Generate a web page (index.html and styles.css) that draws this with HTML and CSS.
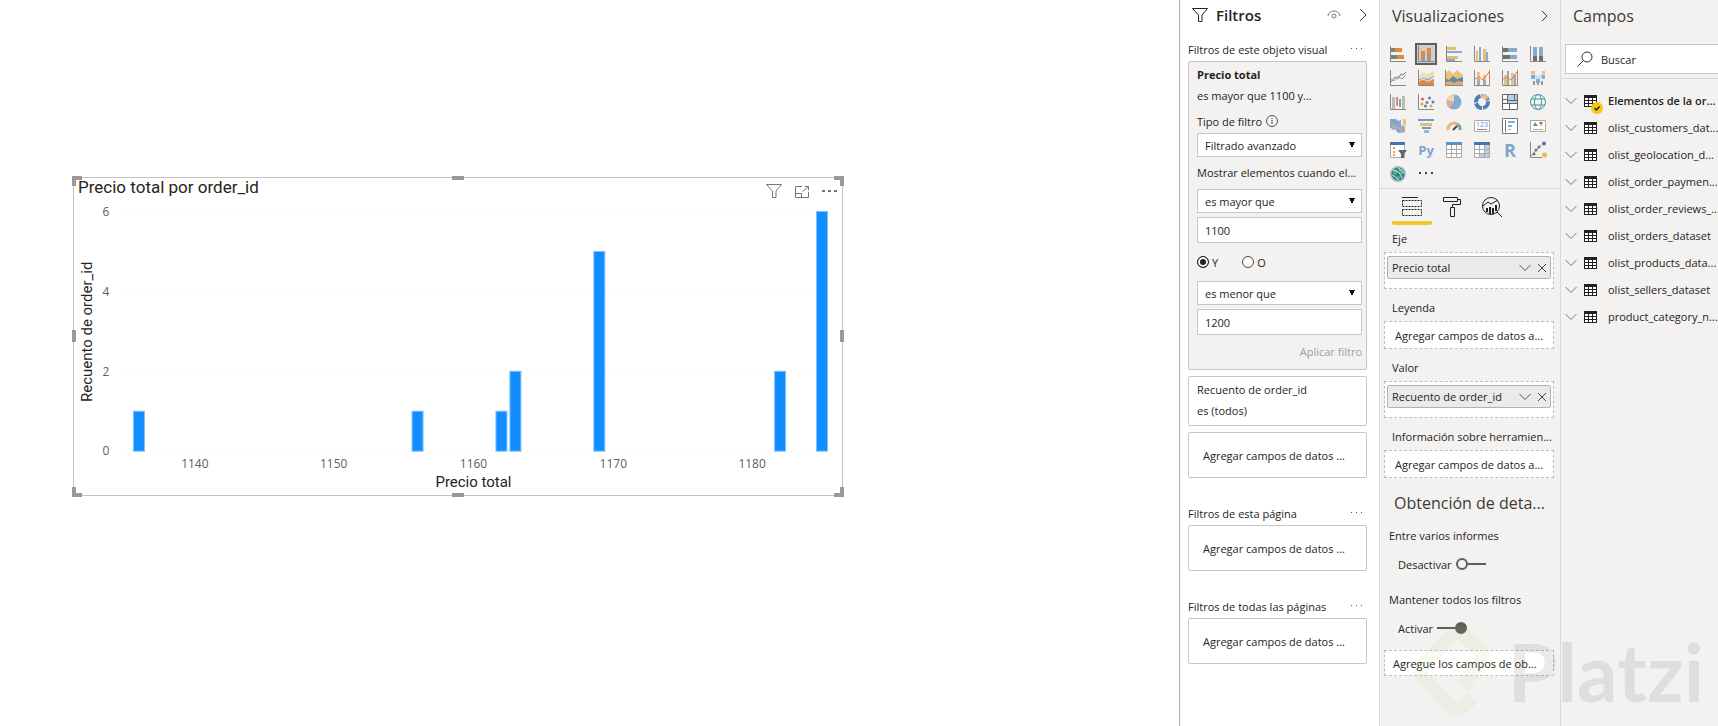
FILE: index.html
```html
<!DOCTYPE html>
<html lang="es">
<head>
	<meta charset="UTF-8">
	<meta name="viewport" content="width=device-width, initial-scale=1.0">
	<title>Precio total por order_id</title>
	<link rel="stylesheet" href="styles.css">
</head>
<body>
	<div class="app">
		<main class="canvas">
			<section class="visual">
				<div class="visual-header">
					<h1>Precio total por order_id</h1>
					<div class="visual-actions">
						<button aria-label="Filtros"><svg width="16" height="16" viewBox="0 0 16 16"><path d="M.5 1.5h15L10 8v6.500H6.500V8z" fill="none" stroke="#777" /></svg></button>
						<button aria-label="Modo de enfoque"><svg width="16" height="16" viewBox="0 0 16 16"><path d="M8 3.500H1.500v11h13V9M1.500 10.500h6v4M8.500 8.500l6-5M10.500 3.500h4v4" fill="none" stroke="#777" /></svg></button>
						<button aria-label="Más opciones"><svg width="16" height="16" viewBox="0 0 16 16"><path d="M0 7h3v2H0zM6 7h3v2H6zM12 7h3v2h-3z" fill="#777" /></svg></button>
					</div>
				</div>
				<svg class="chart" viewBox="0 0 769 290">
					<g class="grid-lines">
						<path d="M46 8.500H744M46 88.500H744M46 168.500H744M46 248.500H744" />
					</g>
					<g class="bars">
						<rect x="59.500" y="208.500" width="11" height="40" />
						<rect x="338.500" y="208.500" width="11" height="40" />
						<rect x="422.500" y="208.500" width="11" height="40" />
						<rect x="436.500" y="168.500" width="11" height="80" />
						<rect x="520.500" y="48.500" width="11" height="200" />
						<rect x="701.500" y="168.500" width="11" height="80" />
						<rect x="743.500" y="8.500" width="11" height="240" />
					</g>
					<g class="ticks">
						<text x="32" y="13">6</text>
						<text x="32" y="93">4</text>
						<text x="32" y="173">2</text>
						<text x="32" y="252">0</text>
						<text x="121" y="265">1140</text>
						<text x="260" y="265">1150</text>
						<text x="400" y="265">1160</text>
						<text x="540" y="265">1170</text>
						<text x="679" y="265">1180</text>
					</g>
					<g class="axis-titles">
						<text x="400" y="284">Precio total</text>
						<text transform="translate(18 129) rotate(-90)">Recuento de order_id</text>
					</g>
				</svg>
				<i class="handle top left"></i>
				<i class="handle top middle"></i>
				<i class="handle top right"></i>
				<i class="handle center left"></i>
				<i class="handle center right"></i>
				<i class="handle bottom left"></i>
				<i class="handle bottom middle"></i>
				<i class="handle bottom right"></i>
			</section>
		</main>

		<aside class="filters">
			<header class="filters-header">
				<svg width="16" height="16" viewBox="0 0 16 16"><path d="M.5 1.500h15L10 8v6.500H6.500V8z" fill="none" stroke="#252423" /></svg>
				<h2>Filtros</h2>
				<button aria-label="Ocultar"><svg width="14" height="12" viewBox="0 0 14 12"><path d="M1 7a6 5 0 0 1 12 0" fill="none" stroke="#777" /><circle cx="7" cy="7" r="2" fill="none" stroke="#777" /></svg></button>
				<button aria-label="Contraer"><svg width="8" height="14" viewBox="0 0 8 14"><path d="M1 1l6 6-6 6" fill="none" stroke="#333" /></svg></button>
			</header>

			<div class="section-title"><h3>Filtros de este objeto visual</h3><button aria-label="Más"><svg width="12" height="2" viewBox="0 0 12 2"><path d="M0 0h1v1H0zM5 0h1v1H5zM10 0h1v1h-1z" fill="#555"/></svg></button></div>
			<form class="card active">
				<strong class="card-title">Precio total</strong>
				<p class="card-summary">es mayor que 1100 y...</p>
				<label class="type-label" for="filter-type">Tipo de filtro
					<svg width="12" height="12" viewBox="0 0 12 12"><circle cx="6" cy="6" r="5.500" fill="none" stroke="#555" /><path d="M6 5v4M6 3v1" stroke="#555" /></svg>
				</label>
				<select id="filter-type"><option>Filtrado avanzado</option></select>
				<label class="show-label" for="cond-1">Mostrar elementos cuando el...</label>
				<select id="cond-1"><option>es mayor que</option></select>
				<input type="text" value="1100" aria-label="Valor mínimo">
				<div class="radios">
					<label><input type="radio" name="join" checked>Y</label>
					<label><input type="radio" name="join">O</label>
				</div>
				<select aria-label="Segunda condición"><option>es menor que</option></select>
				<input type="text" value="1200" aria-label="Valor máximo">
				<button class="apply" type="button" disabled>Aplicar filtro</button>
			</form>
			<div class="card">
				<p class="card-title">Recuento de order_id</p>
				<p class="card-summary">es (todos)</p>
			</div>
			<div class="card drop">Agregar campos de datos ...</div>

			<div class="section-title spaced"><h3>Filtros de esta página</h3><button aria-label="Más"><svg width="12" height="2" viewBox="0 0 12 2"><path d="M0 0h1v1H0zM5 0h1v1H5zM10 0h1v1h-1z" fill="#555"/></svg></button></div>
			<div class="card drop">Agregar campos de datos ...</div>

			<div class="section-title spaced"><h3>Filtros de todas las páginas</h3><button aria-label="Más"><svg width="12" height="2" viewBox="0 0 12 2"><path d="M0 0h1v1H0zM5 0h1v1H5zM10 0h1v1h-1z" fill="#555"/></svg></button></div>
			<div class="card drop">Agregar campos de datos ...</div>
		</aside>

		<aside class="visualizations">
			<header class="pane-header">
				<h2>Visualizaciones</h2>
				<button aria-label="Contraer"><svg width="8" height="14" viewBox="0 0 8 14"><path d="M1 2l5 5-5 5" fill="none" stroke="#333" /></svg></button>
			</header>

			<div class="gallery">
				<button aria-label="Barras apiladas"><svg viewBox="0 0 16 16"><path fill="#808080" d="M1 2h4v4H1zM1 9h6v4H1z"/><path fill="#e0893f" d="M5 2h7v4H5zM7 9h7v4H7z"/><path class="axis" d="M.5 0v15.500H16"/></svg></button>
				<button class="selected" aria-label="Columnas apiladas"><svg viewBox="0 0 16 16"><path fill="#999" d="M3 11h4v4H3zM9 9h4v6H9z"/><path fill="#e0893f" d="M3 5h4v6H3zM9 2h4v7H9z"/><path class="axis" d="M.5 0v15.500H16"/></svg></button>
				<button aria-label="Barras agrupadas"><svg viewBox="0 0 16 16"><path fill="#e6bc73" d="M1 1h9v3H1zM1 10h11v3H1z"/><path fill="#86abd0" d="M1 5h15v2H1zM1 13h8v2H1z"/><path class="axis" d="M.5 0v15.500H16"/></svg></button>
				<button aria-label="Columnas agrupadas"><svg viewBox="0 0 16 16"><path fill="#e6bc73" d="M2 5h2v10H2zM9 3h3v12H9z"/><path fill="#86abd0" d="M5 1h2v14H5zM12 6h2v9h-2z"/><path class="axis" d="M.5 0v15.500H16"/></svg></button>
				<button aria-label="Barras 100% apiladas"><svg viewBox="0 0 16 16"><path fill="#707070" d="M1 2h5v4H1zM1 9h7v4H1z"/><path fill="#86abd0" d="M6 2h9v4H6zM8 9h7v4H8z"/><path class="axis" d="M.5 0v15.500H16"/></svg></button>
				<button aria-label="Columnas 100% apiladas"><svg viewBox="0 0 16 16"><path fill="#707070" d="M3 10h4v5H3zM9 10h4v5H9z"/><path fill="#86abd0" d="M3 1h4v9H3zM9 1h4v9H9z"/><path class="axis" d="M.5 0v15.500H16"/></svg></button>

				<button aria-label="Líneas"><svg viewBox="0 0 16 16"><path fill="none" stroke="#4a8fc4" d="M1 12l4-5 3 2 3-5 2 1 3-3"/><path fill="none" stroke="#d68a7e" d="M1 9l3 2 4-5 4 3 4-4"/><path class="axis" d="M.5 0v15.500H16"/></svg></button>
				<button aria-label="Áreas"><svg viewBox="0 0 16 16"><path fill="#f0dcb4" d="M1 6l4-4 4 2 7-3v10H1z"/><path fill="#86abd0" d="M1 9l5-1 4 1 6-3v7H1z"/><path fill="#f3f2f1" d="M1 10l5-1 4 2 6-4v2l-6 3-4-2-5 1z"/><path fill="#e0893f" d="M1 11l5-1 4 2 6-3v6H1z"/><path class="axis" d="M.5 0v15.500H16"/></svg></button>
				<button aria-label="Áreas apiladas"><svg viewBox="0 0 16 16"><path fill="#ecc27a" d="M-1 4l4-4 4 4 4-4 6 5v10H-1z"/><path fill="#5c8ba8" d="M-1 8l4 2 4-4 4 3 6-2v6H-1z"/><path fill="#e9a36c" d="M-1 12l5-1 4 2 4-2 5 1v3H-1z"/><path class="axis" d="M-.5 0v15.500H17"/></svg></button>
				<button aria-label="Líneas y columnas apiladas"><svg viewBox="0 0 16 16"><path fill="#ecc27a" d="M3 2h3v7H3zM9 5h3v5H9z"/><path fill="#aaa" d="M3 9h3v6H3zM9 10h3v5H9z"/><path fill="none" stroke="#d97b58" d="M1 9l4-2 4 3 6-8M15.500 0v15"/><path class="axis" d="M.5 0v15.500H16"/></svg></button>
				<button aria-label="Líneas y columnas agrupadas"><svg viewBox="0 0 16 16"><path fill="#86abd0" d="M5 1h2v14H5zM12 5h2v10h-2z"/><path fill="#ecc27a" d="M2 5h3v10H2zM9 3h3v12H9z"/><path fill="none" stroke="#d97b58" d="M1 9l4-2 4 3 6-8M15.500 0v15"/><path class="axis" d="M.5 0v15.500H16"/></svg></button>
				<button aria-label="Cinta"><svg viewBox="0 0 16 16"><path fill="#cfdcea" d="M2 3l6 3 6-4v4l-6 5-6-4z"/><path fill="#86abd0" d="M1 5h4v4H1zM6 9h4v4H6zM12 5h3v4h-3z"/><path fill="#ecc27a" d="M1 1h4v3H1zM12 1h3v3h-3z"/><path fill="#999" d="M3 11h2v4H3zM7 13h2v2H7zM11 11h2v4h-2z"/></svg></button>

				<button aria-label="Cascada"><svg viewBox="0 0 16 16"><path fill="#bbb" d="M2 3h3v12H2zM12 2h3v13h-3z"/><path fill="#d68a7e" d="M6 3h2v9H6z"/><path fill="#7aa893" d="M9 5h2v8H9z"/><path class="axis" d="M.5 0v15.500H16"/></svg></button>
				<button aria-label="Dispersión"><svg viewBox="0 0 16 16"><g fill="#d06b5c"><circle cx="4.500" cy="5" r="1.500"/><circle cx="9" cy="8.500" r="1.500"/></g><g fill="#4f86bc"><circle cx="11.500" cy="4" r="1.500"/><circle cx="7.500" cy="12" r="1.500"/><circle cx="15" cy="8" r="1.500"/></g><g fill="#e0a94b"><circle cx="4" cy="10" r="1.500"/><circle cx="13" cy="12" r="1.500"/></g><path class="axis" d="M.5 0v15.500H16"/></svg></button>
				<button aria-label="Circular"><svg viewBox="0 0 16 16"><circle cx="8" cy="8" r="7.500" fill="#86abd0"/><path fill="#ecd9b0" d="M8 8L1 6a7.500 7.500 0 0 1 7-6z"/><path fill="#e3aba0" d="M8 8L1 6a7.500 7.500 0 0 0 3 8z"/></svg></button>
				<button aria-label="Anillos"><svg viewBox="0 0 16 16"><circle cx="8" cy="8" r="6" fill="none" stroke="#4d80b4" stroke-width="4" stroke-dasharray="8 1"/><path d="M8 2a6 6 0 0 1 5 3" fill="none" stroke="#ecc27a" stroke-width="4"/></svg></button>
				<button aria-label="Treemap"><svg viewBox="0 0 16 16"><path fill="#fff" d="M0 0h16v16H0z"/><path fill="#b9cfe4" d="M5 0h10v9H5z"/><path fill="none" stroke="#666" d="M.5 .5h15v15H.5zM5.500 .5v9M.5 9.500h15M12.500 .5v6M7.500 9.500v6M.5 5.500h5M5.500 6.500h10"/></svg></button>
				<button aria-label="Mapa"><svg viewBox="0 0 16 16"><g fill="#eef6f6" stroke="#4b9296"><circle cx="8" cy="8" r="7.500"/><ellipse cx="8" cy="8" rx="3.500" ry="7.500"/><path d="M1 5h14M1 11h14"/></g></svg></button>

				<button aria-label="Mapa coroplético"><svg viewBox="0 0 16 16"><path fill="#7ca6d0" d="M0 1h6l2 2 3-1v5l-2 3 3 4-4 1-3-4-5-1z"/><path fill="#aaa" d="M0 5l5 1 3 3 4-2 3 2v5l-4 1-2-4-7 1z"/><path fill="#ecc27a" d="M13 1h3v7l-3-1z"/></svg></button>
				<button aria-label="Embudo"><svg viewBox="0 0 16 16"><path fill="#6e9cca" d="M0 1h16v2H0zM4 9h9v2H4z"/><path fill="#e6bc73" d="M2 5h12v3H2z"/><path fill="#9ab9d8" d="M6 12h5v3H6z"/></svg></button>
				<button aria-label="Medidor"><svg viewBox="0 0 16 16"><path d="M2 12a6 6 0 0 1 9-6" fill="none" stroke="#e6bc73" stroke-width="3"/><path d="M11 6a6 6 0 0 1 3 6" fill="none" stroke="#7aa893" stroke-width="3"/><path d="M7 12l4-4" stroke="#444" stroke-width="2"/></svg></button>
				<button aria-label="Tarjeta"><svg viewBox="0 0 16 16"><path fill="#fff" stroke="#aaa" d="M.5 2.500h15v11H.5z"/><path d="M3 11.500h10" stroke="#888"/><text x="8" y="9" class="digits">123</text></svg></button>
				<button aria-label="Tarjeta de varias filas"><svg viewBox="0 0 16 16"><path fill="#fff" stroke="#777" d="M.5 .5h15v15H.5z"/><path fill="#777" d="M3 2h1v12H3z"/><path fill="#86abd0" d="M6 3h7v2H6zM6 7h4v2H6zM6 11h3v1H6z"/></svg></button>
				<button aria-label="KPI"><svg viewBox="0 0 16 16"><path fill="#fff" stroke="#aaa" d="M.5 2.500h15v11H.5z"/><path fill="#5a9a80" d="M3 8l2-4 3 4z"/><path fill="#c96353" d="M9 4h4l-2 4z"/><path d="M3 11.500h10" stroke="#aaa"/></svg></button>

				<button aria-label="Segmentación"><svg viewBox="0 0 16 16"><path fill="#fff" stroke="#aaa" d="M.5 .5h14v15H.5z"/><path fill="#3f78ac" d="M0 0h15v3H0z"/><path fill="#e6a367" d="M3 5h2v2H3zM3 9h2v2H3zM3 12h2v2H3z"/><path fill="#666" d="M8 8h9l-3 4v4h-3v-4z"/></svg></button>
				<button class="letters" aria-label="Python">Py</button>
				<button aria-label="Tabla"><svg viewBox="0 0 16 16"><path fill="#fff" stroke="#aaa" d="M.5 .5h15v15H.5zM5.500 2v13M10.500 2v13M0 7.500h15M0 11.500h15"/><path fill="#5d92c4" d="M0 0h16v3H0z"/></svg></button>
				<button aria-label="Matriz"><svg viewBox="0 0 16 16"><path fill="#fff" stroke="#aaa" d="M.5 .5h15v15H.5z"/><path fill="#b9cfe4" d="M10 3h5v12h-5zM5 11h10v4H5z"/><path fill="none" stroke="#aaa" d="M5.500 2v13M10.500 2v13M0 7.500h15M0 11.500h15"/><path fill="#3f78ac" d="M0 0h16v3H0z"/></svg></button>
				<button class="letters big" aria-label="R">R</button>
				<button aria-label="Elementos influyentes"><svg viewBox="0 0 16 16"><path class="axis" d="M.5 0v15.500H12M1 14L11 3"/><g fill="#777"><circle cx="4" cy="12" r="1.500"/><circle cx="6" cy="8" r="1.500"/><circle cx="9" cy="5" r="1.500"/></g><circle cx="14" cy="1.500" r="2" fill="#3f78ac"/><circle cx="14.500" cy="13" r="2.500" fill="#e6bc4c"/></svg></button>

				<button aria-label="ArcGIS"><svg viewBox="0 0 16 16"><circle cx="8" cy="8" r="8" fill="#a9c3bd"/><circle cx="8" cy="8" r="6.500" fill="#2878a8"/><path fill="#58b06c" d="M3 5l4-2 1 3-2 3-3-1zM9 2l4 3-1 4-3-2zM7 10l4 1-2 3-3-1z"/><path fill="none" stroke="#d5e8df" d="M3 4q7 1 9 8M8 2q5 2 6 6M2 9q4 1 6 5"/></svg></button>
				<button aria-label="Más visualizaciones"><svg viewBox="0 0 16 16"><path fill="#444" d="M1 6h2v2H1zM7 6h2v2H7zM13 6h2v2h-2z"/></svg></button>
			</div>

			<nav class="tabs">
				<button class="current" aria-label="Campos"><svg width="20" height="20" viewBox="0 0 20 20"><path d="M0 .5h16" stroke="#222"/><path d="M.5 3.500h19v6H.5zM.5 12.500h19v6H.5z" fill="none" stroke="#222" stroke-dasharray="2 1"/></svg></button>
				<button aria-label="Formato"><svg width="20" height="20" viewBox="0 0 20 20"><path d="M1.500 .5h14v4h-14zM15.500 2.500h3v5h-8v3M8.500 10.500h4v9h-4z" fill="none" stroke="#222"/></svg></button>
				<button aria-label="Análisis"><svg width="20" height="20" viewBox="0 0 20 20"><circle cx="9" cy="9" r="8.500" fill="none" stroke="#222"/><path d="M1 9l5-4 3 2 7-4M15 15l5 5" fill="none" stroke="#222"/><path d="M5 11v4M8 10v7M11 11v6M14 8v6" stroke="#222" stroke-width="2"/></svg></button>
			</nav>

			<h3 class="well-title">Eje</h3>
			<div class="well filled">
				<div class="chip"><span>Precio total</span>
					<button aria-label="Opciones"><svg width="12" height="8" viewBox="0 0 12 8"><path d="M.5 1L6 6.500 11.500 1" fill="none" stroke="#555"/></svg></button>
					<button aria-label="Quitar"><svg width="10" height="10" viewBox="0 0 10 10"><path d="M1 1l8 8M9 1L1 9" stroke="#444"/></svg></button>
				</div>
			</div>
			<h3 class="well-title">Leyenda</h3>
			<div class="well">Agregar campos de datos a...</div>
			<h3 class="well-title">Valor</h3>
			<div class="well filled">
				<div class="chip"><span>Recuento de order_id</span>
					<button aria-label="Opciones"><svg width="12" height="8" viewBox="0 0 12 8"><path d="M.5 1L6 6.500 11.500 1" fill="none" stroke="#555"/></svg></button>
					<button aria-label="Quitar"><svg width="10" height="10" viewBox="0 0 10 10"><path d="M1 1l8 8M9 1L1 9" stroke="#444"/></svg></button>
				</div>
			</div>
			<h3 class="well-title">Información sobre herramien...</h3>
			<div class="well">Agregar campos de datos a...</div>

			<h2 class="drill-title">Obtención de deta...</h2>
			<p class="drill-label">Entre varios informes</p>
			<label class="toggle"><span>Desactivar</span><input type="checkbox" role="switch"></label>
			<p class="drill-label">Mantener todos los filtros</p>
			<label class="toggle"><span>Activar</span><input type="checkbox" role="switch" checked></label>
			<div class="well last">Agregue los campos de ob...</div>
		</aside>

		<aside class="fields">
			<header class="pane-header"><h2>Campos</h2></header>
			<div class="search">
				<svg width="16" height="16" viewBox="0 0 16 16"><circle cx="10" cy="6" r="5" fill="none" stroke="#333"/><path d="M6.500 9.500L.5 15.500" stroke="#333"/></svg>
				<input type="text" placeholder="Buscar" aria-label="Buscar">
			</div>
			<ul class="tables" id="table-list"></ul>
		</aside>

		<div class="watermark">
			<svg width="82" height="98" viewBox="0 0 82 98"><path d="M60 76L51 85q-6 6-12 0L11 55q-6-6 0-12L40 13q6-6 12 0L68 28q6 6 0 12L50 64" fill="none" stroke="#98ca3f" stroke-width="14"/></svg>
			<span>Platzi</span>
		</div>
	</div>

	<script>
		const tables = [
			"Elementos de la or...",
			"olist_customers_dat...",
			"olist_geolocation_d...",
			"olist_order_paymen...",
			"olist_order_reviews_...",
			"olist_orders_dataset",
			"olist_products_data...",
			"olist_sellers_dataset",
			"product_category_n..."
		];
		const tableList = document.getElementById("table-list");

		for (let i = 0; i < tables.length; i++) {
			const li = document.createElement("li");
			li.innerHTML = '<svg width="12" height="8" viewBox="0 0 12 8"><path d="M.5 1L6 6.500 11.500 1" fill="none" stroke="#777"/></svg>' +
				'<span class="table-icon"><svg width="13" height="12" viewBox="0 0 13 12"><path d="M0 0h13v12H0z" fill="#222"/><path d="M1 3h3v2H1zM5 3h3v2H5zM9 3h3v2H9zM1 6h3v2H1zM5 6h3v2H5zM9 6h3v2H9zM1 9h3v2H1zM5 9h3v2H5zM9 9h3v2H9z" fill="#fff"/></svg></span>' +
				'<span class="table-name"></span>';
			li.querySelector(".table-name").innerText = tables[i];
			if (i === 0) {
				li.classList.add("used");
				li.querySelector(".table-icon").innerHTML += '<svg class="badge" width="12" height="12" viewBox="0 0 12 12"><circle cx="6" cy="6" r="6" fill="#f2c811"/><path d="M3.500 6l2 2 3-3.500" fill="none" stroke="#222" stroke-width="1.500"/></svg>';
			}
			tableList.appendChild(li);
		}
	</script>
</body>
</html>
```
FILE: styles.css
```css
*, *::before, *::after {
	box-sizing: border-box;
}

body {
	margin: 0;
	font-family: "Open Sans", sans-serif;
	font-size: 11px;
	color: #252423;
	background-color: white;
}

h1, h2, h3, p, ul {
	margin: 0;
	padding: 0;
	font-weight: normal;
	font-size: inherit;
}

button {
	padding: 0;
	border: none;
	background: none;
	font: inherit;
	color: inherit;
	cursor: pointer;
}

svg {
	display: block;
	flex: none;
}

.app {
	position: relative;
	display: flex;
	min-height: 100vh;
	overflow: hidden;
}

/* report canvas */
.canvas {
	flex: 1;
	min-width: 0;
	padding: 177px 336px 0 73px;
}

.visual {
	position: relative;
	border: 1px solid #c4c4c4;
	padding-bottom: 2px;
	font-family: Roboto, sans-serif;
}

.visual-header {
	display: flex;
	justify-content: space-between;
	height: 25px;
	padding: 0 4px;
}

.visual-header h1 {
	font-size: 17px;
	line-height: 18px;
}

.visual-actions {
	display: flex;
	align-items: center;
	gap: 12px;
}

.chart {
	width: 100%;
	height: auto;
}

.grid-lines path {
	stroke: #e6e6e6;
	stroke-dasharray: 1 5;
}

.bars rect {
	fill: #118dff;
	stroke: #7cc0ff;
}

.ticks text {
	fill: #605e5c;
	font-family: "Open Sans", sans-serif;
	font-size: 12px;
	text-anchor: middle;
}

.axis-titles text {
	fill: #252423;
	font-size: 15px;
	text-anchor: middle;
}

.handle {
	position: absolute;
	width: 10px;
	height: 10px;
	border: 0 solid #999;
}

.handle.top { top: -2px; border-top-width: 4px; }
.handle.bottom { bottom: -2px; border-bottom-width: 4px; }
.handle.left { left: -2px; border-left-width: 4px; }
.handle.right { right: -2px; border-right-width: 4px; }
.handle.middle { left: calc(50% - 6px); width: 12px; }
.handle.center { top: calc(50% - 6px); height: 12px; }

/* filters pane */
.filters {
	flex: 0 0 200px;
	min-width: 0;
	padding: 0 12px 0 8px;
	border-left: 1px solid #b3b0ad;
}

.filters-header {
	display: flex;
	align-items: center;
	height: 29px;
	margin-bottom: 8px;
	padding-left: 4px;
}

.filters-header h2 {
	flex: 1;
	margin-left: 8px;
	font-size: 15px;
	font-weight: 600;
}

.filters-header button + button {
	margin-left: 18px;
}

.section-title {
	display: flex;
	justify-content: space-between;
	align-items: center;
	height: 24px;
	padding-right: 4px;
	white-space: nowrap;
}

.section-title.spaced {
	margin-top: 23px;
}

.card {
	margin-bottom: 6px;
	padding: 3px 8px;
	border: 1px solid #c8c6c4;
	border-radius: 2px;
	white-space: nowrap;
}

.card.active {
	padding: 3px 4px 0 8px;
	background-color: #f3f2f1;
}

.card-title {
	display: block;
	line-height: 20px;
}

.card-summary {
	line-height: 22px;
}

.card.drop {
	height: 46px;
	margin-bottom: 0;
	padding: 0 14px;
	line-height: 46px;
}

.type-label {
	display: flex;
	align-items: center;
	gap: 4px;
	height: 24px;
	margin-top: 2px;
}

.show-label {
	display: block;
	line-height: 32px;
}

.card select,
.card input[type="text"] {
	display: block;
	width: 100%;
	height: 24px;
	padding: 0 7px;
	border: 1px solid #c8c6c4;
	border-radius: 0;
	background-color: white;
	color: inherit;
	font: inherit;
}

.card select {
	appearance: none;
	background-image: linear-gradient(to top right, transparent 50%, #111 50%), linear-gradient(to top left, transparent 50%, #111 50%);
	background-size: 3px 6px;
	background-position: right 9px center, right 6px center;
	background-repeat: no-repeat;
}

.card input[type="text"] {
	height: 26px;
	margin-top: 4px;
}

.radios {
	display: flex;
	gap: 24px;
	align-items: center;
	height: 38px;
}

.radios label {
	display: flex;
	align-items: center;
	gap: 3px;
}

.radios input {
	appearance: none;
	width: 12px;
	height: 12px;
	margin: 0;
	border: 1px solid #444;
	border-radius: 50%;
	background-color: white;
}

.radios input:checked {
	border-color: #222;
	background-color: #222;
	box-shadow: inset 0 0 0 2px white;
}

.apply {
	display: block;
	margin-left: auto;
	line-height: 34px;
	color: #a19f9d;
}

/* visualizations pane */
.visualizations {
	flex: 0 0 181px;
	min-width: 0;
	border-left: 1px solid #dad9d8;
	background-color: #f3f2f1;
	white-space: nowrap;
}

.pane-header {
	display: flex;
	align-items: center;
	justify-content: space-between;
	height: 32px;
	padding: 0 11px 0 12px;
	color: #3b3a39;
}

.pane-header h2 {
	font-size: 16px;
}

.gallery {
	display: grid;
	grid-template-columns: repeat(6, 28px);
	grid-auto-rows: 24px;
	padding: 10px 4px 2px;
	border-bottom: 1px solid #dad9d8;
}

.gallery button {
	display: flex;
	align-items: center;
	justify-content: center;
	width: 22px;
	height: 22px;
	margin: 1px 3px;
}

.gallery .selected {
	border: 2px solid #605e5c;
	background-color: #d0cecc;
}

.gallery svg {
	width: 16px;
	height: 16px;
	overflow: visible;
}

.axis {
	fill: none;
	stroke: #888;
}

.digits {
	fill: #5d92c4;
	font-size: 7px;
	text-anchor: middle;
}

.gallery .letters {
	color: #7ca6d0;
	font-size: 13px;
	font-weight: bold;
}

.gallery .big {
	font-size: 18px;
}

.tabs {
	display: flex;
	padding: 8px 12px 0;
}

.tabs button {
	display: flex;
	justify-content: center;
	width: 40px;
	height: 28px;
	border-bottom: 4px solid transparent;
}

.tabs .current {
	border-color: #ecc92c;
	border-radius: 2px;
}

.well-title {
	height: 32px;
	padding: 6px 0 0 12px;
	line-height: 26px;
}

.tabs + .well-title {
	height: 27px;
	padding-top: 2px;
	line-height: 24px;
}

.well {
	height: 28px;
	margin: 0 6px 0 4px;
	padding: 0 10px;
	border: 1px dashed #c0bebc;
	background-color: white;
	line-height: 28px;
}

.well.filled {
	height: 37px;
	padding: 3px 2px;
}

.chip {
	display: flex;
	align-items: center;
	gap: 6px;
	height: 23px;
	padding: 0 3px 0 4px;
	border: 1px solid #b3b0ad;
	border-radius: 2px;
	background-color: #eaeaea;
	line-height: 20px;
}

.chip span {
	flex: 1;
}

.drill-title {
	padding: 10px 0 0 14px;
	font-size: 16px;
	line-height: 30px;
	color: #3b3a39;
}

.drill-label {
	padding: 4px 0 0 9px;
	line-height: 28px;
}

.toggle {
	display: flex;
	align-items: center;
	gap: 4px;
	height: 28px;
	margin-bottom: 4px;
	padding-left: 18px;
}

.toggle input {
	appearance: none;
	display: flex;
	align-items: center;
	width: 30px;
	height: 12px;
	margin: 0;
}

.toggle input::before {
	content: "";
	width: 12px;
	height: 12px;
	border: 2px solid #605e5c;
	border-radius: 50%;
}

.toggle input::after {
	content: "";
	flex: 1;
	height: 2px;
	background-color: #605e5c;
}

.toggle input:checked {
	flex-direction: row-reverse;
}

.toggle input:checked::before {
	background-color: #605e5c;
}

.well.last {
	height: 26px;
	margin-top: 8px;
	padding: 0 8px;
	line-height: 26px;
}

/* fields pane */
.fields {
	flex: 0 0 158px;
	min-width: 0;
	overflow: hidden;
	border-left: 1px solid #dad9d8;
	background-color: #f3f2f1;
}

.search {
	display: flex;
	align-items: center;
	gap: 8px;
	height: 30px;
	margin: 12px -2px 4px 4px;
	padding-left: 11px;
	border: 1px solid #c8c6c4;
	background-color: white;
}

.search input {
	flex: 1;
	min-width: 0;
	padding: 0;
	border: none;
	font: inherit;
}

.search input::placeholder {
	color: #252423;
}

.tables {
	padding: 8px 0 0 4px;
	border-top: 1px solid #dad9d8;
	list-style-type: none;
}

.tables li {
	display: flex;
	align-items: center;
	height: 27px;
	white-space: nowrap;
}

.table-icon {
	position: relative;
	margin: 0 11px 0 7px;
}

.used .table-name {
	font-weight: 600;
}

.badge {
	position: absolute;
	top: 7px;
	left: 7px;
}

.watermark {
	position: absolute;
	right: 14px;
	bottom: 6px;
	display: flex;
	align-items: center;
	gap: 14px;
	opacity: 0.08;
	pointer-events: none;
	color: black;
	font-family: Lato, sans-serif;
	font-size: 80px;
	font-weight: bold;
	line-height: 98px;
}
```
